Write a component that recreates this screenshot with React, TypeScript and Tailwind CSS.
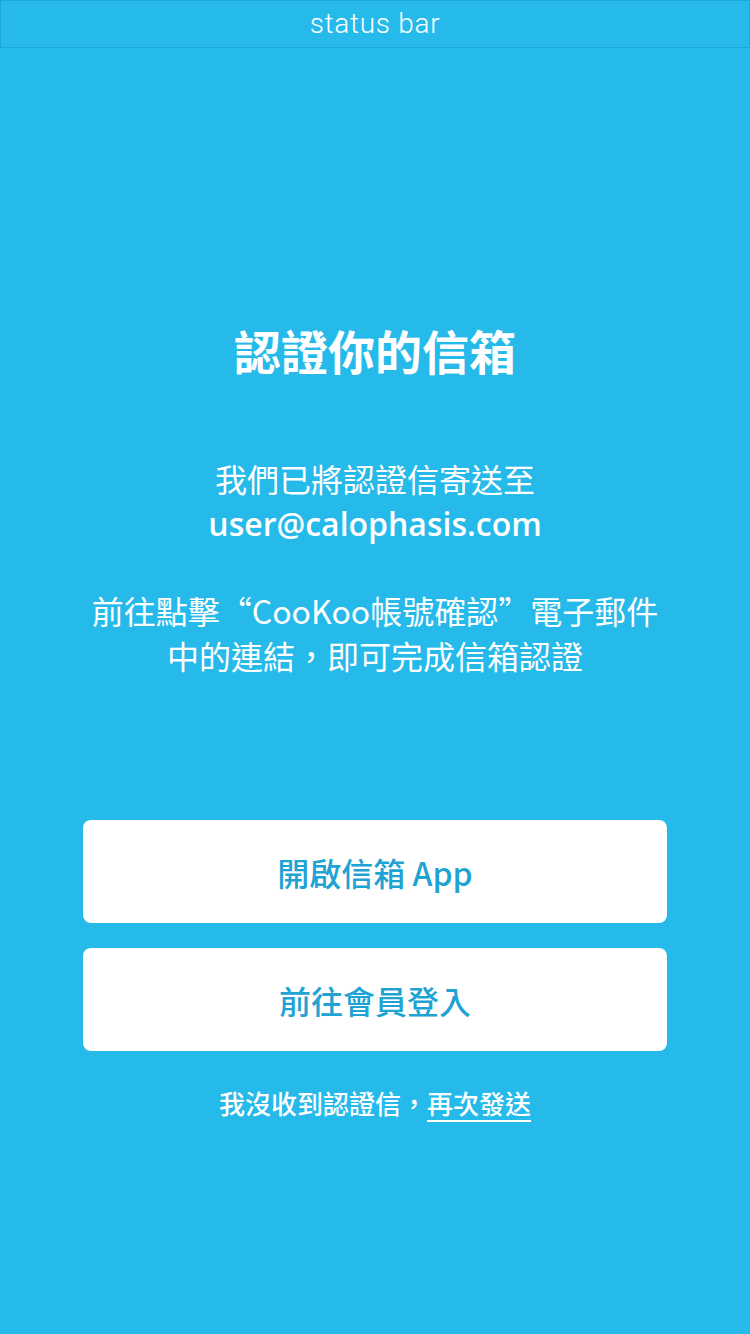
import React from 'react';

const font = { fontFamily: '"Noto Sans CJK TC", "Noto Sans", sans-serif' };

export default function App() {
  return (
    <div className="w-[750px] h-[1334px] bg-[#25baea] flex flex-col text-white" style={font}>
      <div className="h-[48px] border border-[#1ea6d4] flex items-center justify-center">
        <span className="text-[28px] font-light tracking-wide" style={{ fontFamily: 'Roboto, sans-serif' }}>
          status bar
        </span>
      </div>

      <div className="flex flex-col items-center pt-[270px]">
        <h1 className="text-[47px] font-bold leading-[64px]">認證你的信箱</h1>

        <div className="mt-[74px] flex flex-col items-center text-[32px] leading-[45px]">
          <p>我們已將認證信寄送至</p>
          <p className="font-semibold" style={{ fontFamily: '"Open Sans", "Noto Sans", sans-serif' }}>
            user@calophasis.com
          </p>
          <p className="mt-[42px]">前往點擊“CooKoo帳號確認”電子郵件</p>
          <p>中的連結，即可完成信箱認證</p>
        </div>

        <div className="mt-[142px] w-[584px] flex flex-col gap-[25px]">
          <button className="h-[103px] rounded-[8px] bg-white text-[#1ea3d2] text-[32px] font-medium">
            開啟信箱 App
          </button>
          <button className="h-[103px] rounded-[8px] bg-white text-[#1ea3d2] text-[32px] font-medium">
            前往會員登入
          </button>
        </div>

        <p className="mt-[32px] text-[26px] font-medium leading-[40px]">
          我沒收到認證信，
          <span className="underline underline-offset-[6px] decoration-2">再次發送</span>
        </p>
      </div>
    </div>
  );
}
